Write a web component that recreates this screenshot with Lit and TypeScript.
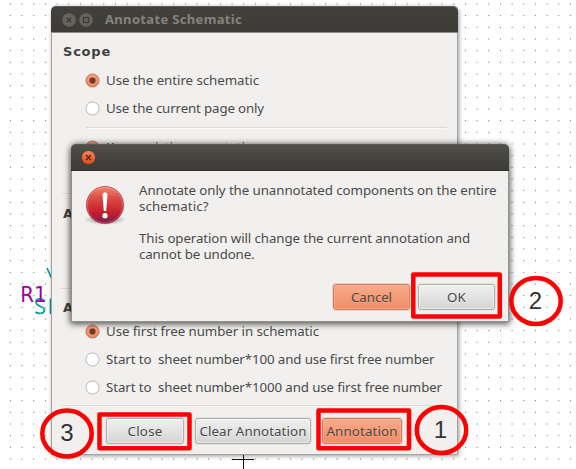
import { LitElement, html, css, svg } from "lit";
import { customElement, property } from "lit/decorators.js";

/** Text whose letter spacing is tuned so that it fills a given width. */
@customElement("fit-label")
class FitLabel extends LitElement {
  @property({ type: Number }) w = 0;
  @property() text = "";
  static styles = css`
    :host { display: inline-block; white-space: pre; }
  `;
  render() {
    return html`<span>${this.text}</span>`;
  }
  updated() {
    const s = this.renderRoot.querySelector("span") as HTMLElement;
    s.style.letterSpacing = "0px";
    if (!this.w) return;
    const natural = s.getBoundingClientRect().width;
    s.style.letterSpacing = `${(this.w - natural) / this.text.length}px`;
  }
}

@customElement("radio-row")
class RadioRow extends LitElement {
  @property({ type: Boolean }) on = false;
  @property() text = "";
  @property({ type: Number }) w = 0;
  static styles = css`
    :host { display: flex; align-items: center; height: 28px; padding-left: 33px; gap: 6px; }
    svg { flex: none; display: block; }
    fit-label { margin-bottom: 1px; }
  `;
  render() {
    return html`<svg width="15" height="15" viewBox="0 0 15 15">
        <defs><linearGradient id="g" x2="0" y2="1"><stop offset="0" stop-color="#f49a78" /><stop offset="1" stop-color="#e8774c" /></linearGradient></defs>
        ${this.on
          ? svg`<circle cx="7.5" cy="7.5" r="6.6" fill="url(#g)" stroke="#c9856c"/><circle cx="7.5" cy="7.5" r="4.6" fill="none" stroke="#f7a585" stroke-width=".8"/><circle cx="7.5" cy="7.5" r="3" fill="#6f3a2a"/>`
          : svg`<circle cx="7.5" cy="7.5" r="6.6" fill="#fff" stroke="#bdb9b4"/>`}
      </svg><fit-label .w=${this.w} .text=${this.text}></fit-label>`;
  }
}

@customElement("push-button")
class PushButton extends LitElement {
  @property() text = "";
  @property({ type: Number }) w = 0;
  static styles = css`
    :host {
      display: flex; align-items: center; justify-content: center; box-sizing: border-box;
      height: 26px; border: 1px solid #b1aeaa; border-radius: 3px;
      background: linear-gradient(#f0f0f0, #e3e3e3 50%, #d4d4d4);
      box-shadow: inset 0 0 0 1px #ffffff70, 0 0 0 1px #e4e2df;
      text-shadow: 0 1px 0 #ffffff70;
    }
    :host([accent]) {
      border-color: #c58267; background: linear-gradient(#f9ab8c, #f59b77 50%, #ee8d67);
      box-shadow: inset 0 0 0 1px #ffb59980, 0 0 0 1px #f0cfc3;
      text-shadow: 0 1px 0 #ffc0a560;
    }
    fit-label { margin-bottom: 1px; }
  `;
  render() {
    return html`<fit-label .w=${this.w} .text=${this.text}></fit-label>`;
  }
}

@customElement("app-root")
class AppRoot extends LitElement {
  static styles = css`
    :host {
      display: block; position: relative; width: 576px; height: 469px; overflow: hidden;
      background: #fff; color: #4a4a4a; font: 13.3px/16px "Noto Sans", "Open Sans", sans-serif;
    }
    .canvas { position: absolute; inset: 0; }
    .window { position: absolute; box-sizing: border-box; display: flex; flex-direction: column; background: #f1f0ee; border-radius: 6px 6px 0 0; }
    .main { left: 51px; top: 6px; width: 407px; height: 449px; border: 1px solid #a4a29f; border-top: 0; box-shadow: 1px 1px 4px #0006; }
    .dialog { left: 71px; top: 144px; width: 438px; height: 178px; border: 1px solid #92908c; border-top: 0; box-shadow: 0 1px 6px 1px #000a; }
    .bar { display: flex; align-items: center; box-sizing: border-box; flex: none; border-radius: 5px 5px 0 0; margin: 0 -1px; border-top: 1px solid #5a5953; }
    .main .bar { height: 27px; padding-left: 11px; gap: 3px; background: linear-gradient(#42413c, #3c3b37); border-bottom: 1px solid #8d8b87; }
    .dialog .bar { height: 27px; padding-left: 10px; background: linear-gradient(#504f49, #3c3b37); border-bottom: 1px solid #302f2c; }
    .bar svg { flex: none; }
    .title { color: #85827b; font: bold 13px/16px "Noto Sans", sans-serif; margin: 0 0 1px 9px; }
    .heading { display: flex; align-items: center; height: 28px; padding-left: 11px; font: bold 13px/16px "DejaVu Sans", sans-serif; color: #404040; }
    .rule { height: 1px; background: #dcdad7; border-bottom: 1px solid #f9f8f7; margin: 0 10px; flex: none; }
    .rule.inset { margin-left: 34px; }
    .scope { display: flex; flex-direction: column; height: 160px; padding-top: 5px; box-sizing: border-box; }
    .scope .rule { margin-top: 5px; margin-bottom: 4px; }
    .order { height: 93px; padding-top: 5px; box-sizing: border-box; }
    .choice { height: 115px; padding-top: 4px; box-sizing: border-box; }
    .choice .heading { height: 24px; padding-top: 4px; box-sizing: border-box; }
    .choice radio-row:nth-child(2) { margin-top: -1px; }
    .actions { display: flex; gap: 11px; padding: 11px 0 0 54px; }
    .close { width: 78px; } .clear { width: 116px; } .annotate { width: 80px; }
    .message { display: flex; padding: 11px 0 0 11px; gap: 12px; }
    .message p { margin: 0 0 16px; display: flex; flex-direction: column; align-items: flex-start; }
    .message svg { flex: none; margin-top: 2px; }
    .confirm { display: flex; gap: 8px; justify-content: flex-end; padding-right: 13px; margin-top: 6px; }
    .confirm push-button { width: 77px; height: 26px; }
    .marks { position: absolute; inset: 0; font-family: "Liberation Sans", sans-serif; }
  `;

  render() {
    return html`
      <svg class="canvas" width="576" height="469">
        <defs><pattern id="dots" x="9.9" y="3.5" width="11.667" height="11.667" patternUnits="userSpaceOnUse"><rect width="1" height="1" fill="#666" /></pattern></defs>
        <rect width="576" height="464" fill="url(#dots)" />
        <path d="M232 459.5H254M243.5 454V469" stroke="#111" />
        <path d="M47 268L52 279M44.500 301.500C43 298 36 298 36 302C36 307 44.500 306 44.500 310C44.500 314 38 314 35.500 312M50.500 298.500V314" fill="none" stroke="#0a9c9c" stroke-width="1.7" />
        <text x="20.200" y="301.800" font-family="DejaVu Sans" font-size="21" textLength="26.500" lengthAdjust="spacingAndGlyphs" fill="#a000a0">R1</text>
      </svg>
      <section class="window main">
        <div class="bar">
          <svg width="14" height="14"><circle cx="7" cy="7" r="6.8" fill="#65635d" /><path d="M4.8 4.8L9.2 9.2M9.2 4.8L4.8 9.2" stroke="#3a3935" stroke-width="1.4" /></svg>
          <svg width="14" height="14"><circle cx="7" cy="7" r="6.8" fill="#65635d" /><rect x="4.5" y="4.5" width="5" height="5" fill="none" stroke="#3a3935" stroke-width="1.2" /></svg>
          <fit-label class="title" .w=${137} .text=${"Annotate Schematic"}></fit-label>
        </div>
        <div class="scope">
          <div class="heading"><fit-label .w=${48} .text=${"Scope"}></fit-label></div>
          <radio-row on text="Use the entire schematic" .w=${153}></radio-row>
          <radio-row text="Use the current page only" .w=${158}></radio-row>
          <div class="rule inset"></div>
          <radio-row on text="Keep existing annotation" .w=${155}></radio-row>
        </div>
        <div class="rule"></div>
        <div class="order"><div class="heading">A</div></div>
        <div class="rule"></div>
        <div class="choice">
          <div class="heading">A</div>
          <radio-row on text="Use first free number in schematic" .w=${213}></radio-row>
          <radio-row text="Start to  sheet number*100 and use first free number" .w=${328.5}></radio-row>
          <radio-row text="Start to  sheet number*1000 and use first free number" .w=${336}></radio-row>
        </div>
        <div class="rule"></div>
        <div class="actions">
          <push-button class="close" text="Close" .w=${35}></push-button>
          <push-button class="clear" text="Clear Annotation" .w=${107}></push-button>
          <push-button class="annotate" accent text="Annotation" .w=${71}></push-button>
        </div>
      </section>
      <section class="window dialog">
        <div class="bar">
          <svg width="15" height="15"><defs><linearGradient id="c" x2="0" y2="1"><stop offset="0" stop-color="#f58762" /><stop offset="1" stop-color="#df4b1c" /></linearGradient></defs><circle cx="7.5" cy="7.5" r="7" fill="url(#c)" stroke="#34302b" stroke-width=".6" /><path d="M5 5L10 10M10 5L5 10" stroke="#5d2413" stroke-width="1.4" /></svg>
        </div>
        <div class="message">
          <svg width="44" height="44" viewBox="83 184 44 44">
            <defs>
              <linearGradient id="e" x2="0" y2="1"><stop offset="0" stop-color="#ee8a68" /><stop offset=".3" stop-color="#dc4e45" /><stop offset=".7" stop-color="#c5202c" /><stop offset="1" stop-color="#7c1850" /></linearGradient>
              <radialGradient id="s"><stop offset=".5" stop-color="#000" stop-opacity=".25" /><stop offset="1" stop-color="#000" stop-opacity="0" /></radialGradient>
            </defs>
            <ellipse cx="105" cy="219.500" rx="21" ry="5.500" fill="url(#s)" />
            <circle cx="105" cy="205" r="18.600" fill="url(#e)" stroke="#b5364a" stroke-width=".7" />
            <circle cx="105" cy="205" r="17.600" fill="none" stroke="#fff" stroke-opacity=".2" />
            <path d="M102.500 194Q105 190.500 107.500 194L106.200 211H103.800Z" fill="#fff" /><circle cx="105" cy="215.700" r="2.600" fill="#fff" />
          </svg>
          <div>
            <p><fit-label .w=${357.5} .text=${"Annotate only the unannotated components on the entire"}></fit-label><fit-label .w=${69.5} .text=${"schematic?"}></fit-label></p>
            <p><fit-label .w=${331} .text=${"This operation will change the current annotation and"}></fit-label><fit-label .w=${115.5} .text=${"cannot be undone."}></fit-label></p>
          </div>
        </div>
        <div class="confirm">
          <push-button accent text="Cancel" .w=${41}></push-button>
          <push-button text="OK" .w=${19}></push-button>
        </div>
      </section>
      <svg class="marks" width="576" height="469" fill="none" stroke="#fe0000" stroke-width="4.5">
        <g stroke-linejoin="round">
          <rect x="413.300" y="274.500" width="86.500" height="42" />
          <rect x="99.500" y="414.500" width="90" height="33.800" />
          <rect x="318.500" y="410.500" width="90.500" height="37.800" />
        </g>
        <ellipse cx="536" cy="301" rx="24.700" ry="23" />
        <ellipse cx="67" cy="433.500" rx="24.700" ry="23" />
        <ellipse cx="441.500" cy="430" rx="24.700" ry="23" />
        <g stroke="none" fill="#333" font-size="24" text-anchor="middle">
          <text x="535.500" y="309">2</text><text x="67" y="441">3</text><text x="440.500" y="438">1</text>
        </g>
      </svg>
    `;
  }
}
